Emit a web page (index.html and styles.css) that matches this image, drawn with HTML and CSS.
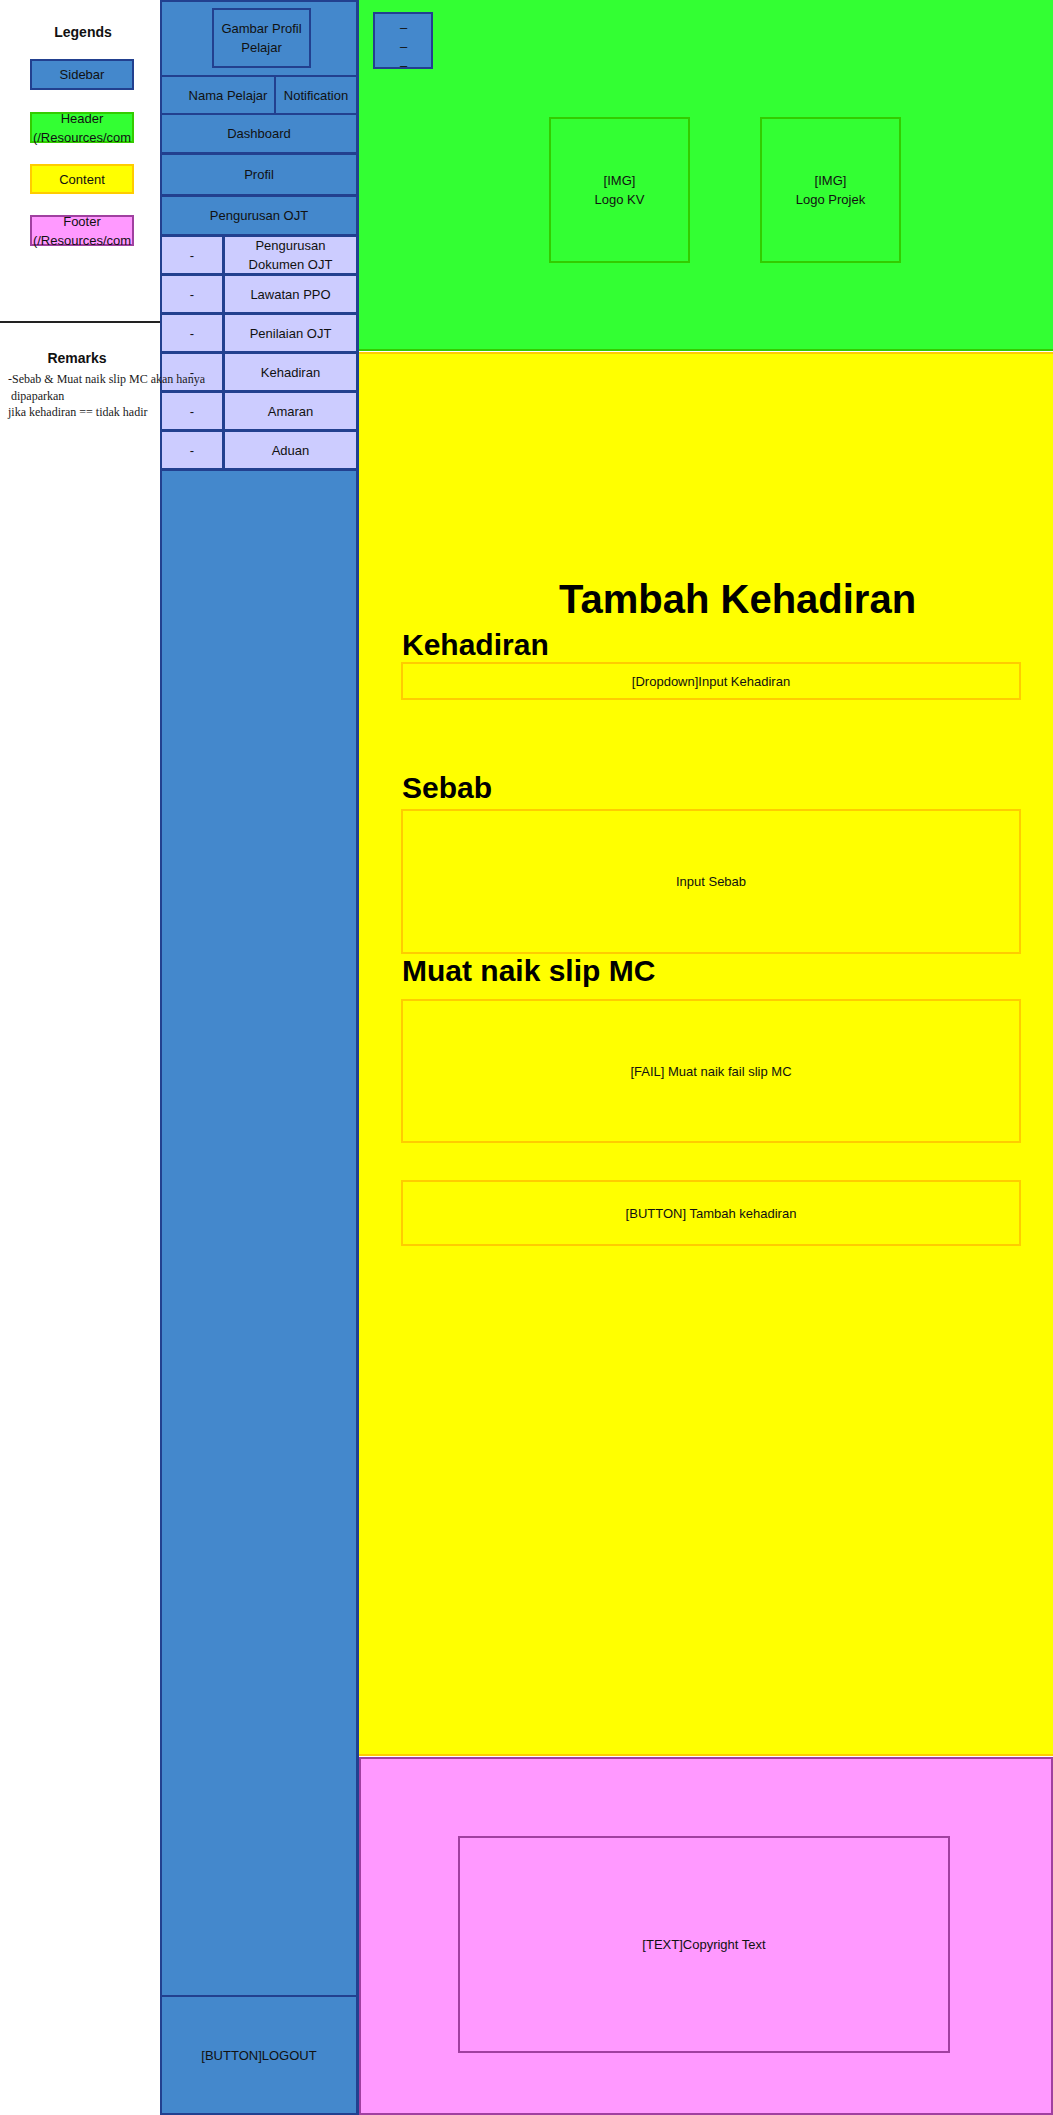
FILE: index.html
```html
<!DOCTYPE html>
<html lang="ms">
<head>
<meta charset="utf-8">
<title>Tambah Kehadiran</title>
<link rel="stylesheet" href="styles.css">
</head>
<body>
<div class="page">
  <aside class="legend-panel">
    <h2 class="legend-title">Legends</h2>
    <div class="legend-box lg-sidebar">Sidebar</div>
    <div class="legend-box lg-header">Header<br>(/Resources/com</div>
    <div class="legend-box lg-content">Content</div>
    <div class="legend-box lg-footer">Footer<br>(/Resources/com</div>
    <div class="divider"></div>
    <h2 class="remarks-title">Remarks</h2>
    <p class="remarks">-Sebab &amp; Muat naik slip MC akan hanya
 dipaparkan
jika kehadiran == tidak hadir</p>
  </aside>

  <nav class="sidebar">
    <div class="profile-wrap">
      <div class="profile-pic">Gambar Profil<br>Pelajar</div>
    </div>
    <div class="user-row">
      <div class="user-name">Nama Pelajar</div>
      <div class="user-notif">Notification</div>
    </div>
    <div class="nav-item nav-dashboard">Dashboard</div>
    <div class="nav-item nav-profil">Profil</div>
    <div class="nav-item nav-ojt">Pengurusan OJT</div>
    <div class="sub-item"><div class="sub-dash">-</div><div class="sub-label">Pengurusan<br>Dokumen OJT</div></div>
    <div class="sub-item"><div class="sub-dash">-</div><div class="sub-label">Lawatan PPO</div></div>
    <div class="sub-item"><div class="sub-dash">-</div><div class="sub-label">Penilaian OJT</div></div>
    <div class="sub-item"><div class="sub-dash">-</div><div class="sub-label">Kehadiran</div></div>
    <div class="sub-item"><div class="sub-dash">-</div><div class="sub-label">Amaran</div></div>
    <div class="sub-item"><div class="sub-dash">-</div><div class="sub-label">Aduan</div></div>
    <div class="sidebar-spacer"></div>
    <div class="logout">[BUTTON]LOGOUT</div>
  </nav>

  <main class="main">
    <header class="header">
      <div class="hamburger">–<br>–<br>–</div>
      <div class="logos">
        <div class="logo-box">[IMG]<br>Logo KV</div>
        <div class="logo-box">[IMG]<br>Logo Projek</div>
      </div>
    </header>

    <section class="content">
      <h1 class="page-title">Tambah Kehadiran</h1>
      <h2 class="field-title ft-kehadiran">Kehadiran</h2>
      <div class="field-box fb-dropdown">[Dropdown]Input Kehadiran</div>
      <h2 class="field-title ft-sebab">Sebab</h2>
      <div class="field-box fb-sebab">Input Sebab</div>
      <h2 class="field-title ft-slip">Muat naik slip MC</h2>
      <div class="field-box fb-slip">[FAIL] Muat naik fail slip MC</div>
      <div class="field-box fb-button">[BUTTON] Tambah kehadiran</div>
    </section>

    <footer class="footer">
      <div class="copyright">[TEXT]Copyright Text</div>
    </footer>
  </main>
</div>
</body>
</html>
```

FILE: styles.css
```css
* {
  box-sizing: border-box;
}

html,
body {
  margin: 0;
  padding: 0;
}

body {
  width: 1053px;
  height: 2115px;
  overflow: hidden;
  background: #ffffff;
  font-family: "Liberation Sans", Arial, sans-serif;
  font-size: 13px;
  color: #111111;
}

.page {
  display: flex;
  width: 1053px;
  height: 2115px;
}

/* ---------- Legend panel ---------- */
.legend-panel {
  width: 160px;
  flex: none;
  position: relative;
  z-index: 2;
  display: flex;
  flex-direction: column;
  align-items: flex-start;
}

.legend-title {
  width: 100%;
  margin: 24px 0 0 0;
  padding-left: 6px;
  text-align: center;
  font-size: 14px;
  line-height: 17px;
  font-weight: bold;
}

.legend-box {
  margin-left: 30px;
  width: 104px;
  height: 31px;
  border: 2px solid;
  display: flex;
  flex-direction: column;
  justify-content: center;
  align-items: center;
  text-align: center;
  line-height: 19px;
  white-space: nowrap;
}

.lg-sidebar {
  margin-top: 18px;
  background: #4488cc;
  border-color: #22408f;
}

.lg-header {
  margin-top: 22px;
  background: #33ff33;
  border-color: #33cc00;
}

.lg-content {
  margin-top: 21px;
  height: 30px;
  background: #ffff00;
  border-color: #ffcc00;
}

.lg-footer {
  margin-top: 21px;
  background: #ff99ff;
  border-color: #a040a0;
}

.divider {
  margin-top: 75px;
  width: 160px;
  height: 2px;
  background: #222222;
}

.remarks-title {
  width: 100%;
  margin: 27px 0 0 0;
  padding-right: 6px;
  text-align: center;
  font-size: 14px;
  line-height: 17px;
  font-weight: bold;
}

.remarks {
  margin: 4px 0 0 8px;
  font-family: "Liberation Serif", "Times New Roman", serif;
  font-size: 12px;
  line-height: 16.7px;
  white-space: pre;
  color: #1a1a1a;
}

/* ---------- Sidebar ---------- */
.sidebar {
  width: 199px;
  flex: none;
  background: #4488cc;
  border-left: 2px solid #22408f;
  border-right: 3px solid #22408f;
  border-top: 2px solid #22408f;
  border-bottom: 2px solid #22408f;
  display: flex;
  flex-direction: column;
}

.profile-wrap {
  height: 75px;
  padding-top: 6px;
  border-bottom: 2px solid #22408f;
}

.profile-pic {
  margin-left: 50px;
  width: 99px;
  height: 60px;
  border: 2px solid #22408f;
  display: flex;
  align-items: center;
  justify-content: center;
  text-align: center;
  line-height: 19px;
}

.user-row {
  height: 38px;
  display: flex;
  border-bottom: 2px solid #22408f;
}

.user-name {
  width: 114px;
  border-right: 2px solid #22408f;
  display: flex;
  align-items: center;
  justify-content: center;
  padding-left: 20px;
}

.user-notif {
  flex: 1;
  display: flex;
  align-items: center;
  justify-content: center;
}

.nav-item {
  display: flex;
  align-items: center;
  justify-content: center;
  border-bottom: 3px solid #22408f;
}

.nav-dashboard {
  height: 40px;
}

.nav-profil {
  height: 42px;
}

.nav-ojt {
  height: 40px;
}

.sub-item {
  height: 39px;
  display: flex;
  background: #ccccff;
  border-bottom: 3px solid #22408f;
}

.sub-dash {
  width: 63px;
  border-right: 3px solid #22408f;
  display: flex;
  align-items: center;
  justify-content: center;
}

.sub-label {
  flex: 1;
  display: flex;
  align-items: center;
  justify-content: center;
  text-align: center;
  line-height: 19px;
}

.sidebar-spacer {
  flex: 1;
}

.logout {
  height: 118px;
  border-top: 2px solid #22408f;
  display: flex;
  align-items: center;
  justify-content: center;
}

/* ---------- Main ---------- */
.main {
  flex: 1;
  display: flex;
  flex-direction: column;
}

.header {
  height: 351px;
  flex: none;
  background: #33ff33;
  border-bottom: 2px solid #33cc00;
  padding: 12px 0 0 14px;
}

.hamburger {
  width: 60px;
  height: 57px;
  border: 2px solid #22408f;
  background: #4488cc;
  padding-top: 4px;
  padding-left: 1px;
  text-align: center;
  line-height: 19px;
  overflow: hidden;
}

.logos {
  display: flex;
  gap: 70px;
  margin-top: 48px;
  margin-left: 176px;
}

.logo-box {
  width: 141px;
  height: 146px;
  border: 2px solid #33cc00;
  display: flex;
  align-items: center;
  justify-content: center;
  text-align: center;
  line-height: 19px;
}

.content {
  height: 1404px;
  flex: none;
  margin-top: 1px;
  background: #ffff00;
  border-top: 2px solid #ffcc00;
  border-bottom: 2px solid #ffcc00;
  padding-left: 42px;
  display: flex;
  flex-direction: column;
  align-items: flex-start;
}

.page-title {
  margin: 225px 0 0 0;
  padding-left: 158px;
  font-size: 40px;
  line-height: 40px;
  font-weight: bold;
  color: #000000;
}

.field-title {
  margin: 0 0 0 1px;
  font-size: 30px;
  line-height: 30px;
  font-weight: bold;
  color: #000000;
}

.ft-kehadiran {
  margin-top: 11px;
}

.ft-sebab {
  margin-top: 73px;
}

.ft-slip {
  margin-top: 2px;
}

.field-box {
  width: 620px;
  border: 2px solid #ffcc00;
  display: flex;
  align-items: center;
  justify-content: center;
}

.fb-dropdown {
  margin-top: 2px;
  height: 38px;
}

.fb-sebab {
  margin-top: 6px;
  height: 145px;
}

.fb-slip {
  margin-top: 13px;
  height: 144px;
}

.fb-button {
  margin-top: 37px;
  height: 66px;
}

.footer {
  flex: 1;
  margin-top: 1px;
  background: #ff99ff;
  border: 2px solid #a040a0;
  padding: 77px 0 0 97px;
}

.copyright {
  width: 492px;
  height: 217px;
  border: 2px solid #a040a0;
  display: flex;
  align-items: center;
  justify-content: center;
}
```
